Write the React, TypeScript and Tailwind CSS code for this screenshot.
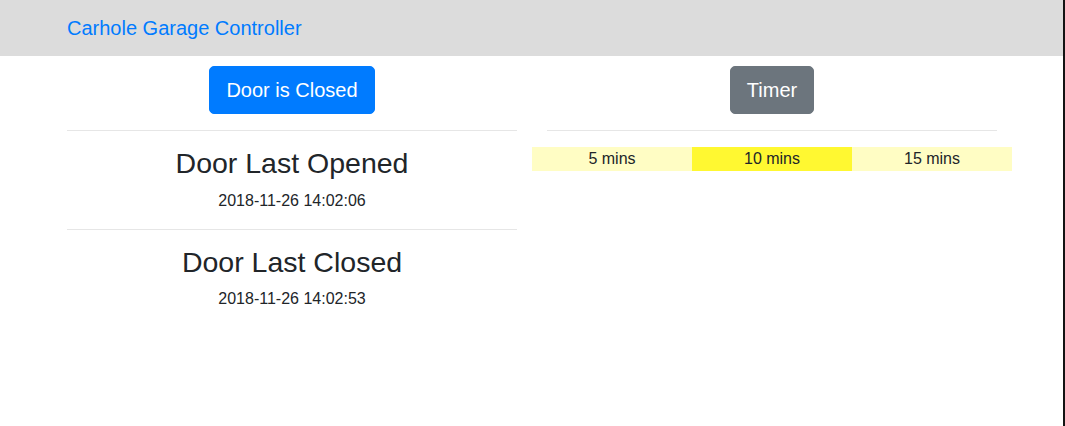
import React from "react";

export default function App() {
  const font = { fontFamily: '"Liberation Sans", Arial, sans-serif' };
  return (
    <div className="flex w-[1065px] h-[426px] bg-white" style={font}>
      <div className="w-[1063px] flex flex-col text-[#212529]">
        <nav className="h-[56px] bg-[#dcdcdc] flex items-center">
          <div className="w-[960px] ml-[52px] px-[15px]">
            <span className="text-[20px] leading-[30px] text-[#007bff]">Carhole Garage Controller</span>
          </div>
        </nav>
        <div className="w-[960px] ml-[52px] flex mt-[10px]">
          <div className="w-[480px] px-[15px] flex flex-col">
            <div className="flex justify-center">
              <button className="bg-[#007bff] text-white text-[20px] leading-[30px] px-[16px] py-[8px] border border-[#007bff] rounded-[5px]">
                Door is Closed
              </button>
            </div>
            <hr className="my-[16px] border-0 border-t border-[#e6e6e6]" />
            <h3 className="text-[28.5px] leading-[33.6px] mb-[8px] text-center font-normal">Door Last Opened</h3>
            <div className="text-[16px] leading-[24px] text-center">2018-11-26 14:02:06</div>
            <hr className="my-[16px] border-0 border-t border-[#e6e6e6]" />
            <h3 className="text-[28.5px] leading-[33.6px] mb-[8px] text-center font-normal">Door Last Closed</h3>
            <div className="text-[16px] leading-[24px] text-center">2018-11-26 14:02:53</div>
          </div>
          <div className="w-[480px] px-[15px] flex flex-col">
            <div className="flex justify-center">
              <button className="bg-[#6c757d] text-white text-[20px] leading-[30px] px-[16px] py-[8px] border border-[#6c757d] rounded-[5px]">
                Timer
              </button>
            </div>
            <hr className="my-[16px] border-0 border-t border-[#e6e6e6]" />
            <div className="flex -mx-[15px] text-[16px] leading-[24px] text-center">
              <div className="w-[160px] bg-[#fffdc4]">5 mins</div>
              <div className="w-[160px] bg-[#fff831]">10 mins</div>
              <div className="w-[160px] bg-[#fffdc4]">15 mins</div>
            </div>
          </div>
        </div>
      </div>
      <div className="w-[2px] h-full bg-[#141414]" />
    </div>
  );
}
